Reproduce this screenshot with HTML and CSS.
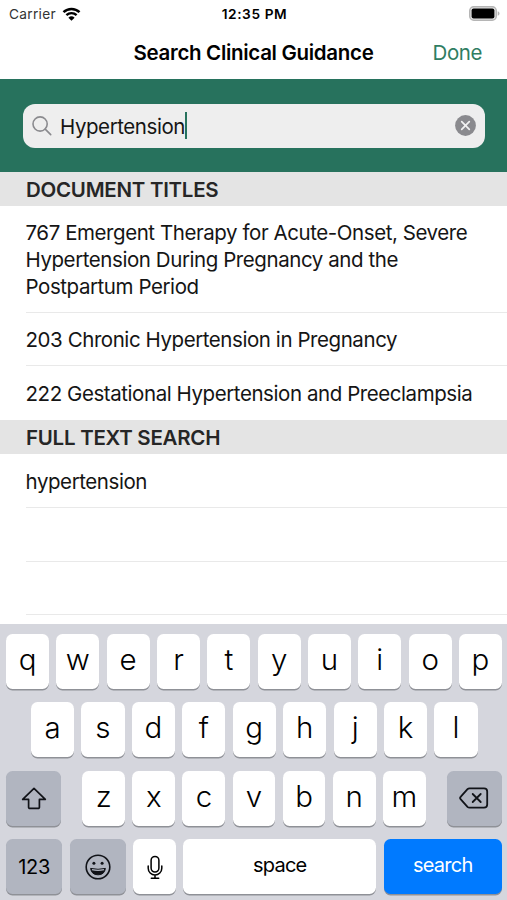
FILE: index.html
```
<!DOCTYPE html>
<html lang="en">
<head>
    <title>Search Clinical Guidance</title>
    <meta charset="utf-8">
    <link rel="stylesheet" href="styles.css">
</head>
<body>
    <div class="status-bar">
        <div class="carrier">
            <span>Carrier</span>
            <svg width="19" height="14" viewBox="0 0 18 14">
                <path d="M1 5.2a11.5 11.5 0 0 1 16 0" fill="none" stroke="#000" stroke-width="2.5"/>
                <path d="M3.9 8.2a7.4 7.4 0 0 1 10.2 0" fill="none" stroke="#000" stroke-width="2.4"/>
                <path d="M9 13.8 5.9 10.7a4.5 4.5 0 0 1 6.2 0z"/>
            </svg>
        </div>
        <span class="clock">12:35 PM</span>
        <svg class="battery" width="31" height="15" viewBox="0 0 31 15">
            <rect x=".75" y=".75" width="26.5" height="13.5" rx="4" fill="#e4e4e4" stroke="#b5b5b5" stroke-width="1.5"/>
            <rect x="2.6" y="2.6" width="22.8" height="9.8" rx="2"/>
            <path d="M28.7 5.3q1.8.5 1.8 2.2t-1.8 2.2z" fill="#b5b5b5"/>
        </svg>
    </div>

    <div class="nav-bar">
        <h1>Search Clinical Guidance</h1>
        <a class="done">Done</a>
    </div>

    <div class="search-panel">
        <div class="search-field">
            <svg class="magnifier" width="20" height="20" viewBox="0 0 20 20" fill="none" stroke="#8a8a8e" stroke-width="1.6" stroke-linecap="round">
                <circle cx="8.1" cy="8" r="7.1"/>
                <path d="M13.2 13.1l5.5 5.5"/>
            </svg>
            <span class="query">Hypertension</span>
            <span class="caret"></span>
            <svg class="clear" width="21" height="21" viewBox="0 0 21 21">
                <circle cx="10.5" cy="10.5" r="10.4" fill="#8a8a8e"/>
                <path d="M6.7 6.7l7.6 7.6M14.3 6.7l-7.6 7.6" stroke="#f2f2f2" stroke-width="1.7" stroke-linecap="round"/>
            </svg>
        </div>
    </div>

    <div class="results">
        <h2>DOCUMENT TITLES</h2>
        <ul>
            <li class="tall">767 Emergent Therapy for Acute-Onset, Severe<br>Hypertension During Pregnancy and the<br>Postpartum Period</li>
            <li>203 Chronic Hypertension in Pregnancy</li>
            <li class="last">222 Gestational Hypertension and Preeclampsia</li>
        </ul>
        <h2>FULL TEXT SEARCH</h2>
        <ul>
            <li class="term">hypertension</li>
            <li></li>
            <li></li>
        </ul>
    </div>

    <div class="keyboard">
        <div class="key-row">
            <div class="key">q</div><div class="key">w</div><div class="key">e</div><div class="key">r</div><div class="key">t</div><div class="key">y</div><div class="key">u</div><div class="key">i</div><div class="key">o</div><div class="key">p</div>
        </div>
        <div class="key-row middle">
            <div class="key">a</div><div class="key">s</div><div class="key">d</div><div class="key">f</div><div class="key">g</div><div class="key">h</div><div class="key">j</div><div class="key">k</div><div class="key">l</div>
        </div>
        <div class="key-row">
            <div class="key gray shift">
                <svg width="26" height="24" viewBox="0 0 26 24" fill="none" stroke="#111318" stroke-width="1.7" stroke-linejoin="round">
                    <path d="M13 2.4L24.3 13.4H18.4V21.2a1.2 1.2 0 0 1-1.2 1.2H8.8a1.2 1.2 0 0 1-1.2-1.2V13.4H1.7z"/>
                </svg>
            </div>
            <div class="key">z</div><div class="key">x</div><div class="key">c</div><div class="key">v</div><div class="key">b</div><div class="key">n</div><div class="key">m</div>
            <div class="key gray delete">
                <svg width="30" height="22" viewBox="0 0 30 22" fill="none" stroke="#111318" stroke-width="1.8" stroke-linejoin="round" stroke-linecap="round">
                    <path d="M10.6 1.3H25a3.2 3.2 0 0 1 3.2 3.2v13A3.2 3.2 0 0 1 25 20.7H10.6a3 3 0 0 1-2.1-.9L1.8 12.4a2 2 0 0 1 0-2.8L8.5 2.2a3 3 0 0 1 2.1-.9z"/>
                    <path d="M13.7 7l8 8M21.7 7l-8 8"/>
                </svg>
            </div>
        </div>
        <div class="key-row">
            <div class="key gray wide numbers">123</div>
            <div class="key gray wide">
                <svg width="26" height="26" viewBox="0 0 26 26" fill="none" stroke="#111318">
                    <circle cx="13" cy="13" r="11.8" stroke-width="1.6"/>
                    <circle cx="8.9" cy="9.3" r="1.5" fill="#111318" stroke="none"/>
                    <circle cx="17.1" cy="9.3" r="1.5" fill="#111318" stroke="none"/>
                    <path d="M5.6 14.4q7.4 1.8 14.8 0q-.9 6.4-7.4 6.4t-7.4-6.4z" fill="#111318" stroke-width="1"/>
                    <path d="M7 15.7q6 1.4 12 0" stroke="#b1b5c0" stroke-width="1.3"/>
                </svg>
            </div>
            <div class="key mic">
                <svg width="16" height="26" viewBox="0 0 16 26" fill="none" stroke="#000" stroke-width="1.5" stroke-linecap="round">
                    <rect x="4.1" y="2.4" width="7.8" height="15.6" rx="3.9"/>
                    <path d="M1.2 12v2.2a6.8 6.8 0 0 0 13.6 0V12M8 21v3.3M4.3 24.3h7.4"/>
                </svg>
            </div>
            <div class="key space">space</div>
            <div class="key search">search</div>
        </div>
    </div>
</body>
</html>
```
FILE: styles.css
```
body {
    margin: 0;
    height: 900px;
    overflow: hidden;
    background-color: #fff;
    color: #151515;
    font-family: Inter, "Liberation Sans", sans-serif;
    font-size: 20.5px;
    letter-spacing: -0.43px;
    display: flex;
    flex-direction: column;
}
svg {
    display: block;
    flex: none;
}
.status-bar {
    height: 27px;
    padding: 0 7px 0 9px;
    display: grid;
    grid-template-columns: 1fr auto 1fr;
    align-items: center;
    font-size: 13.7px;
    letter-spacing: 0.3px;
    color: #000;
}
.carrier {
    display: flex;
    align-items: center;
    gap: 6px;
    color: #333;
}
.clock {
    font-weight: 600;
    letter-spacing: 0.6px;
}
.battery {
    justify-self: end;
}
.nav-bar {
    height: 52px;
    padding: 0 25px 2px;
    box-sizing: border-box;
    display: grid;
    grid-template-columns: 1fr auto 1fr;
    align-items: center;
}
.nav-bar h1 {
    grid-column: 2;
    margin: 0;
    font-size: 20.5px;
    font-weight: 600;
    letter-spacing: -0.31px;
    color: #000;
}
.done {
    justify-self: end;
    color: #2f7d62;
}
.search-panel {
    height: 93px;
    box-sizing: border-box;
    padding: 24.5px 22px 24px 23px;
    background-color: #27725d;
}
.search-field {
    height: 44px;
    box-sizing: border-box;
    padding: 0 9px;
    border-radius: 12px;
    background-color: #eeeeee;
    display: flex;
    align-items: center;
}
.query {
    margin-left: 8px;
    padding-top: 1px;
}
.caret {
    width: 2px;
    height: 27px;
    background-color: #27725d;
}
.clear {
    margin-left: auto;
}
.results {
    flex: 1;
}
.results h2 {
    margin: 0;
    height: 34px;
    line-height: 36px;
    padding-left: 26px;
    background-color: #e4e4e4;
    color: #262626;
    font-size: 20.5px;
    font-weight: 600;
    letter-spacing: -0.27px;
}
.results ul {
    margin: 0;
    padding: 0 0 0 25.5px;
    list-style: none;
}
.results li {
    height: 53.6px;
    box-sizing: border-box;
    padding-top: 13px;
    line-height: 27px;
    border-bottom: 1px solid #e9e9e9;
    white-space: nowrap;
}
.results li.tall {
    height: 106.8px;
}
.results li.last {
    padding-top: 14px;
    border-bottom: none;
}
.results li.term {
    height: 54px;
    padding-top: 14px;
}
.keyboard {
    height: 276px;
    box-sizing: border-box;
    padding: 9.5px 5px 0 6px;
    background-color: #d5d6dd;
    display: flex;
    flex-direction: column;
    gap: 13.5px;
}
.key-row {
    display: flex;
    gap: 7.3px;
}
.key-row.middle {
    padding: 0 24.5px 0 25px;
}
.key {
    flex: 1;
    height: 55px;
    padding-bottom: 5px;
    box-sizing: border-box;
    border-radius: 6.5px;
    background-color: #fff;
    box-shadow: 0 1.4px 0 #8f9197;
    color: #000;
    font-size: 29.5px;
    font-weight: 350;
    letter-spacing: 0;
    display: flex;
    align-items: center;
    justify-content: center;
}
.key.gray {
    background-color: #b1b5c0;
    padding-bottom: 0;
}
.shift {
    flex: 0 0 55px;
    margin-right: 14px;
}
.delete {
    flex: 0 0 55px;
    margin-left: 14px;
}
.wide {
    flex: 0 0 56.3px;
}
.mic {
    flex: 0 0 42.8px;
    padding-bottom: 0;
}
.numbers,
.space,
.search {
    font-size: 20px;
    font-weight: 400;
    letter-spacing: -0.75px;
}
.numbers {
    letter-spacing: -0.3px;
}
.space,
.search {
    padding-bottom: 4px;
}
.search {
    flex: 0 0 118.5px;
    background-color: #007aff;
    color: #fff;
}
```
